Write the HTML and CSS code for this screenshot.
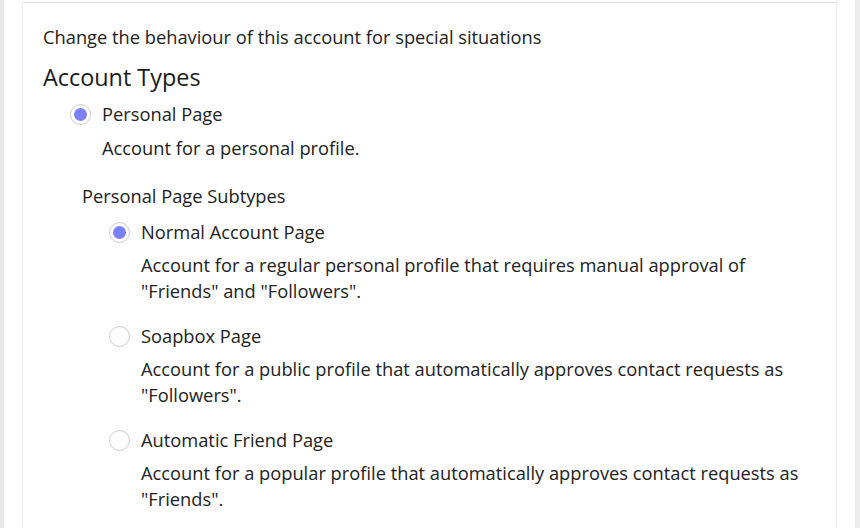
FILE: index.html
```html
<!DOCTYPE html>
<html>
<head>
<meta charset="utf-8">
<link rel="stylesheet" href="styles.css">
</head>
<body>
<div class="page">
  <div class="edge-left"></div>
  <main class="panel">
    <p class="intro">Change the behaviour of this account for special situations</p>
    <h2 class="section-title">Account Types</h2>
    <div class="option top-option">
      <label class="option-label"><input class="radio" type="radio" name="type" checked><span>Personal Page</span></label>
      <p class="option-desc">Account for a personal profile.</p>
    </div>
    <div class="subgroup">
      <h3 class="subgroup-title">Personal Page Subtypes</h3>
      <div class="option sub-option">
        <label class="option-label"><input class="radio" type="radio" name="sub" checked><span>Normal Account Page</span></label>
        <p class="option-desc">Account for a regular personal profile that requires manual approval of "Friends" and "Followers".</p>
      </div>
      <div class="option sub-option">
        <label class="option-label"><input class="radio" type="radio" name="sub"><span>Soapbox Page</span></label>
        <p class="option-desc">Account for a public profile that automatically approves contact requests as "Followers".</p>
      </div>
      <div class="option sub-option">
        <label class="option-label"><input class="radio" type="radio" name="sub"><span>Automatic Friend Page</span></label>
        <p class="option-desc">Account for a popular profile that automatically approves contact requests as "Friends".</p>
      </div>
    </div>
  </main>
  <div class="scrollbar"></div>
</div>
</body>
</html>
```

FILE: styles.css
```css
html, body {
  margin: 0;
  padding: 0;
  background: #ffffff;
}
body {
  font-family: "Open Sans", "Liberation Sans", sans-serif;
  font-size: 18.3px;
  line-height: 26px;
  color: #222222;
  overflow: hidden;
}
.page {
  display: flex;
  height: 528px;
}
.edge-left {
  width: 4px;
  flex: none;
  background: #e9e9e9;
}
.panel {
  flex: none;
  width: 772px;
  margin-left: 18px;
  margin-top: 2px;
  padding: 21px 21px 0 20px;
  border-top: 1px solid #dddddd;
  border-left: 1px solid #eeeeee;
  border-right: 1px solid #eeeeee;
}
.scrollbar {
  margin-left: auto;
  width: 5px;
  flex: none;
  background: #ececec;
}
.intro {
  margin: 0;
}
.section-title {
  margin: 12px 0 0;
  font-size: 23.4px;
  line-height: 30px;
  font-weight: 400;
  color: #1a1a1a;
}
.option {
  display: flex;
  flex-direction: column;
}
.top-option {
  margin: 9px 0 0 27px;
}
.option-label {
  display: flex;
  align-items: center;
  gap: 11px;
}
.radio {
  appearance: none;
  -webkit-appearance: none;
  margin: 0;
  width: 21px;
  height: 21px;
  border: 1px solid #cccccc;
  border-radius: 50%;
  background: #ffffff;
  box-sizing: border-box;
  flex: none;
  position: relative;
}
.radio:checked::after {
  content: "";
  position: absolute;
  left: 3px;
  top: 3px;
  width: 13px;
  height: 13px;
  border-radius: 50%;
  background: #7b80f8;
}
.option-desc {
  margin: 8px 0 0 32px;
}
.subgroup {
  margin: 22px 0 0 39px;
}
.subgroup-title {
  margin: 0;
  font-size: 18.3px;
  line-height: 26px;
  font-weight: 400;
}
.sub-option {
  margin: 10px 0 0 27px;
}
.sub-option + .sub-option {
  margin-top: 19px;
}
.sub-option .option-desc {
  margin-top: 7px;
}
```
